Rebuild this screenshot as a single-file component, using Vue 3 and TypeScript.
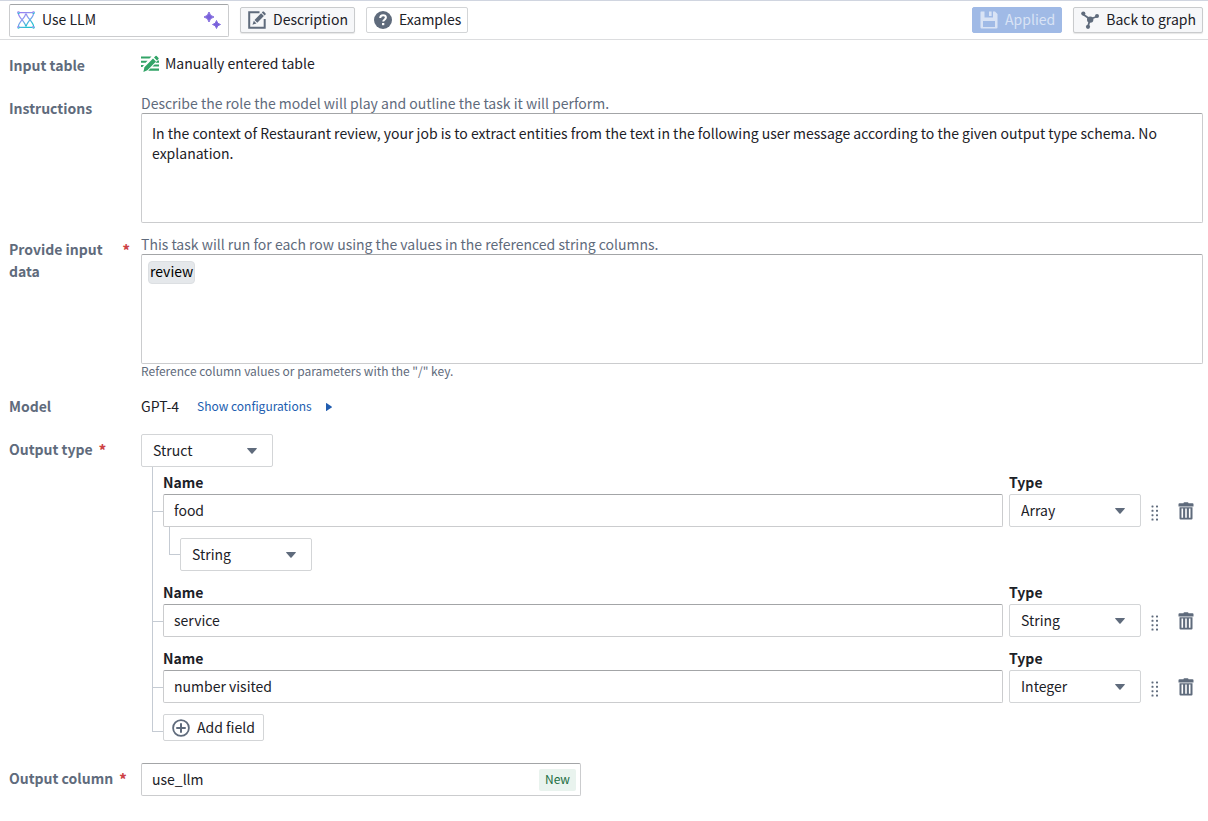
<script setup lang="ts">
import { ref } from 'vue'

interface Field {
  id: number
  name: string
  type: string
  itemType?: string
}

const types = ['Struct', 'Array', 'String', 'Integer']

const transformName = ref('Use LLM')
const instructions = ref(
  'In the context of Restaurant review, your job is to extract entities from the text in the following user message according to the given output type schema. No explanation.',
)
const inputColumns = ref(['review'])
const inputText = ref('')
const outputType = ref('Struct')
const outputColumn = ref('use_llm')
const showConfig = ref(false)
const fields = ref<Field[]>([
  { id: 1, name: 'food', type: 'Array', itemType: 'String' },
  { id: 2, name: 'service', type: 'String' },
  { id: 3, name: 'number visited', type: 'Integer' },
])

function addField(): void {
  const id = Math.max(0, ...fields.value.map((f) => f.id)) + 1
  fields.value.push({ id, name: '', type: 'String' })
}

function removeField(id: number): void {
  fields.value = fields.value.filter((f) => f.id !== id)
}
</script>

<template>
  <div class="page">
    <header class="toolbar">
      <div class="input title-box">
        <svg class="icon" viewBox="0 0 18 18" fill="none" aria-hidden="true">
          <defs>
            <linearGradient id="helix" x1="0" y1="0" x2="0.6" y2="1">
              <stop offset="0" stop-color="#9a7cf0" />
              <stop offset="0.5" stop-color="#8a9cf0" />
              <stop offset="1" stop-color="#1fc3cf" />
            </linearGradient>
          </defs>
          <g stroke="url(#helix)" stroke-width="1.2">
            <path d="M2.200 1.700h13.600M2.200 16.300h13.600" />
            <path d="M1.400 2.600c.4 4.400 6.900 8 7.300 12.800M8.700 2.600c-.4 4.400-6.900 8-7.300 12.800M9.300 2.600c.4 4.400 6.900 8 7.300 12.800M16.600 2.600c-.4 4.400-6.900 8-7.300 12.800" />
            <circle cx="1.500" cy="1.700" r=".8" /><circle cx="16.500" cy="1.700" r=".8" />
            <circle cx="1.500" cy="16.300" r=".8" /><circle cx="16.500" cy="16.300" r=".8" />
          </g>
        </svg>
        <input v-model="transformName" class="bare" type="text" aria-label="Transform name" />
        <svg class="icon" viewBox="0 0 18 18" fill="#7961db" aria-hidden="true">
          <path d="M6 1q.8 4.200 5 5q-4.200.8-5 5q-.8-4.200-5-5q4.200-.8 5-5z" stroke="#7961db" stroke-width=".9" />
          <path d="M13.500 9.500q.6 3.400 4 4q-3.400.6-4 4q-.6-3.400-4-4q3.400-.6 4-4z" stroke="#7961db" stroke-width=".9" />
        </svg>
      </div>
      <button type="button" class="btn filled">
        <svg class="icon" viewBox="0 0 18 18" aria-hidden="true">
          <path d="M11.500 1.300H1.200v15.500h15.500V8" fill="none" stroke="#5f6b7c" stroke-width="2" />
          <path d="M4.500 13.700l1.300-4 2.700 2.700zM6.500 8.900l6.600-6.600 2.800 2.800-6.600 6.600zM13.800 1.600l1-1q.5-.4 1 0l1.800 1.800q.4.500 0 1l-1 1z" fill="#5f6b7c" />
        </svg>
        <span>Description</span>
      </button>
      <button type="button" class="btn">
        <svg class="icon" viewBox="0 0 18 18" aria-hidden="true">
          <circle cx="9" cy="9" r="9" fill="#5f6b7c" />
          <path d="M6.200 7C6.200 5 7.400 4.200 9.100 4.200s2.800.9 2.800 2.400c0 2.100-2.700 2.100-2.700 4" fill="none" stroke="#fff" stroke-width="2" />
          <rect x="8" y="12" width="2.300" height="2.200" fill="#fff" />
        </svg>
        <span>Examples</span>
      </button>
      <div class="spacer"></div>
      <button type="button" class="btn primary" disabled>
        <svg class="icon" viewBox="0 0 18 18" fill="currentColor" aria-hidden="true">
          <path fill-rule="evenodd" d="M1 0.500h3.500v6h8.500v-6h2l2.500 2.500v13.500q0 1-1 1h-15q-1 0-1-1v-15q0-1 .5-1zM3 10v6h12v-6z" />
          <rect x="9" y="0.500" width="2.600" height="4.500" />
        </svg>
        <span>Applied</span>
      </button>
      <button type="button" class="btn filled">
        <svg class="icon" viewBox="0 0 18 18" aria-hidden="true">
          <path d="M2 3.200L8.800 8M16 5.500L9.500 8M7 15.500L9 8.500" stroke="#5f6b7c" stroke-width="1.800" />
          <g fill="#5f6b7c">
            <circle cx="2.300" cy="2.600" r="2.100" /><circle cx="16" cy="5" r="2" />
            <circle cx="7" cy="15.800" r="2.100" /><circle cx="9.200" cy="8.600" r="3.200" />
          </g>
        </svg>
        <span>Back to graph</span>
      </button>
    </header>

    <main class="form">
      <section class="row">
        <div class="label"><span>Input table</span></div>
        <div class="inline source">
          <svg class="icon" viewBox="0 0 18 18" aria-hidden="true">
            <g fill="#32a467">
              <path d="M0 1.600h10.500L8.500 3.600H0zM0 5.800h6.600L4.600 7.800H0zM0 10h3L1.400 12H0zM13.600 9.400H18v2.200h-6.600zM9.400 13.600H18v2.200H7.200zM16.600 5.600H18v2.200h-3.600z" />
              <path d="M3.400 12.200L12 3.600l3 3-8.600 8.600L2.400 17zM13 2.600l1.500-1.500q.6-.5 1.200 0l1.800 1.800q.5.600 0 1.200L16 5.600z" />
            </g>
          </svg>
          <span>Manually entered table</span>
        </div>
      </section>

      <section class="row">
        <label class="label" for="instructions"><span>Instructions</span></label>
        <div>
          <p class="helper">Describe the role the model will play and outline the task it will perform.</p>
          <textarea id="instructions" v-model="instructions" class="input area"></textarea>
        </div>
      </section>

      <section class="row">
        <label class="label" for="input-data"><span>Provide input data</span><b class="req">*</b></label>
        <div>
          <p class="helper">This task will run for each row using the values in the referenced string columns.</p>
          <div class="input token-area">
            <span v-for="column in inputColumns" :key="column" class="token">{{ column }}</span>
            <textarea id="input-data" v-model="inputText" class="bare"></textarea>
          </div>
          <p class="note">Reference column values or parameters with the "/" key.</p>
        </div>
      </section>

      <section class="row">
        <div class="label"><span>Model</span></div>
        <div class="inline model">
          <span>GPT-4</span>
          <button type="button" class="link" :aria-expanded="showConfig" @click="showConfig = !showConfig">
            <span>Show configurations</span>
            <svg class="caret-right" viewBox="0 0 6 8" aria-hidden="true"><path d="M0 .6Q0-.3.800.200L5.600 3.500q.5.500 0 1L.8 7.800Q0 8.300 0 7.400z" fill="#215db0" /></svg>
          </button>
        </div>
      </section>

      <section class="row output-type">
        <label class="label" for="output-type"><span>Output type</span><b class="req">*</b></label>
        <div>
          <div class="select">
            <select id="output-type" v-model="outputType">
              <option v-for="t in types" :key="t">{{ t }}</option>
            </select>
            <svg class="caret" viewBox="0 0 10 6" aria-hidden="true"><path d="M.7 0h8.600q1 0 .4.800L5.600 5.500q-.6.600-1.200 0L.3.800Q-.3 0 .7 0z" /></svg>
          </div>
          <div class="tree">
            <div v-for="field in fields" :key="field.id" class="field">
              <div class="cell">
                <label class="caption" :for="`name-${field.id}`">Name</label>
                <div class="branch">
                  <input :id="`name-${field.id}`" v-model="field.name" class="input text" type="text" />
                </div>
              </div>
              <div class="cell">
                <label class="caption" :for="`type-${field.id}`">Type</label>
                <div class="select">
                  <select :id="`type-${field.id}`" v-model="field.type">
                    <option v-for="t in types" :key="t">{{ t }}</option>
                  </select>
                  <svg class="caret" viewBox="0 0 10 6" aria-hidden="true"><path d="M.7 0h8.600q1 0 .4.800L5.600 5.500q-.6.600-1.200 0L.3.800Q-.3 0 .7 0z" /></svg>
                </div>
              </div>
              <div class="actions">
                <button type="button" class="icon-btn drag" aria-label="Reorder field">
                  <svg viewBox="0 0 8 16" width="8" height="16" fill="#5f6b7c" aria-hidden="true">
                    <g v-for="n in 4" :key="n">
                      <rect x="0.500" :y="n * 4.400 - 4" width="2" height="2" rx=".6" />
                      <rect x="5" :y="n * 4.400 - 4" width="2" height="2" rx=".6" />
                    </g>
                  </svg>
                </button>
                <button type="button" class="icon-btn" aria-label="Delete field" @click="removeField(field.id)">
                  <svg class="icon" viewBox="0 0 18 18" fill="#5f6b7c" aria-hidden="true">
                    <path d="M6.500 1.200Q6.500.3 7.400.3h3.200q.9 0 .9.900h4q1 0 1 1v2.200H1.500V2.200q0-1 1-1z" />
                    <path fill-rule="evenodd" d="M2.500 5.300h13V16.400q0 1.100-1.100 1.100H3.600q-1.100 0-1.100-1.100zM4.500 6.600v9.200h1.600V6.600zM8.200 6.600v9.200h1.600V6.600zM11.900 6.600v9.200h1.600V6.600z" />
                  </svg>
                </button>
              </div>
              <div v-if="field.itemType" class="nested">
                <div class="select">
                  <select v-model="field.itemType" :aria-label="`${field.name} element type`">
                    <option v-for="t in types" :key="t">{{ t }}</option>
                  </select>
                  <svg class="caret" viewBox="0 0 10 6" aria-hidden="true"><path d="M.7 0h8.600q1 0 .4.800L5.600 5.500q-.6.600-1.200 0L.3.800Q-.3 0 .7 0z" /></svg>
                </div>
              </div>
            </div>
            <button type="button" class="btn add" @click="addField">
              <svg class="icon" viewBox="0 0 18 18" fill="none" stroke="#5f6b7c" aria-hidden="true">
                <circle cx="9" cy="9" r="7.900" stroke-width="1.800" />
                <path d="M9 5v8M5 9h8" stroke-width="2" stroke-linecap="round" />
              </svg>
              <span>Add field</span>
            </button>
          </div>
        </div>
      </section>

      <section class="row">
        <label class="label" for="output-column"><span>Output column</span><b class="req">*</b></label>
        <div class="input column-box">
          <input id="output-column" v-model="outputColumn" class="bare" type="text" />
          <span class="tag">New</span>
        </div>
      </section>
    </main>
  </div>
</template>

<style>
body {
  margin: 0;
  background: #fff;
}
</style>

<style scoped>
.page {
  font: 14px/20px "Noto Sans CJK SC", "Open Sans", sans-serif;
  color: #1c2127;
}
.page *,
.page *::before {
  box-sizing: border-box;
}
button,
input,
select,
textarea {
  font: inherit;
  color: inherit;
  margin: 0;
}
p {
  margin: 0;
}
.icon {
  width: 18px;
  height: 18px;
  flex: none;
  display: block;
}
.toolbar {
  display: flex;
  align-items: center;
  gap: 11px;
  height: 40px;
  padding: 0 5px 0 9px;
  border-top: 1px solid #d0d5e0;
  border-bottom: 1px solid #dcdddf;
}
.spacer {
  flex: 1;
}
.input {
  background: #fff;
  border: 1px solid #cbccce;
  border-top-color: #a3a5a7;
  border-radius: 2px;
}
.bare {
  border: 0;
  outline: 0;
  padding: 0 0 2px;
  background: none;
  min-width: 0;
  flex: 1;
  resize: none;
}
.title-box {
  display: flex;
  align-items: center;
  gap: 7px;
  width: 220px;
  height: 33px;
  padding: 0 7px;
}
.btn {
  display: flex;
  align-items: center;
  gap: 7px;
  height: 26px;
  padding: 0 6px 0 7px;
  border: 1px solid #d3d5d7;
  border-radius: 2px;
  background: #fff;
  white-space: nowrap;
}
.btn > span,
.inline span {
  padding-bottom: 2px;
}
.btn.filled {
  background: #f6f7f9;
  border-color: #c9cbcd;
  box-shadow: 0 1px 1px rgba(17, 20, 24, 0.1);
}
.btn.primary {
  background: #a0bae6;
  border-color: #a0bae6;
  color: #d9e3f5;
}
.form {
  display: flex;
  flex-direction: column;
  gap: 11px;
  padding: 10px 5px 20px 9px;
}
.row {
  display: grid;
  grid-template-columns: 121px minmax(0, 1fr);
  column-gap: 11px;
  align-items: start;
}
.label {
  display: flex;
  gap: 6px;
  padding: 4px 0 6px;
  line-height: 22px;
  font-weight: 600;
  color: #5f6b7c;
}
.req {
  color: #cd4246;
}
.inline {
  display: flex;
  align-items: center;
  height: 28px;
}
.source {
  gap: 6px;
}
.model {
  gap: 18px;
  height: 32px;
}
.helper {
  color: #5f6b7c;
}
.note {
  height: 16px;
  color: #5f6b7c;
  font-size: 12px;
  line-height: 14px;
}
.area {
  display: block;
  width: 100%;
  height: 110px;
  padding: 9px 10px;
  resize: none;
}
.token-area {
  display: flex;
  align-items: flex-start;
  gap: 4px;
  height: 110px;
  padding: 6px;
}
.token-area .bare {
  height: 96px;
}
.token {
  padding: 0 1px 2px;
  border: 1px solid #dcdfe2;
  border-radius: 4px;
  background: #e5e8eb;
  color: #000;
  line-height: 19px;
}
.link {
  display: flex;
  align-items: center;
  gap: 14px;
  padding: 0;
  border: 0;
  background: none;
  color: #215db0;
  font-size: 12px;
}
.caret-right {
  width: 6px;
  height: 8px;
}
.output-type {
  padding-bottom: 11px;
}
.select {
  position: relative;
  width: 132px;
  height: 33px;
}
.select select {
  appearance: none;
  display: block;
  width: 100%;
  height: 100%;
  padding: 0 30px 2px 11px;
  border: 1px solid #d3d5d7;
  border-radius: 2px;
  background: #fff;
}
.caret {
  position: absolute;
  top: 14px;
  right: 16px;
  width: 10px;
  height: 6px;
  fill: #5f6b7c;
  pointer-events: none;
}
.tree {
  position: relative;
  display: flex;
  flex-direction: column;
  gap: 6px;
  margin-left: 11px;
  padding-left: 11px;
}
.tree::before {
  content: "";
  position: absolute;
  top: 0;
  left: 0;
  bottom: 9px;
  width: 11px;
  border: solid #c5cbd3;
  border-width: 0 0 1px 1px;
}
.field {
  display: grid;
  grid-template-columns: minmax(0, 1fr) 132px 56px;
  column-gap: 6px;
}
.caption {
  display: block;
  padding: 4px 0 1px;
  line-height: 22px;
  font-weight: 600;
}
.branch {
  position: relative;
}
.branch::before {
  content: "";
  position: absolute;
  left: -11px;
  top: 17px;
  width: 11px;
  border-top: 1px solid #c5cbd3;
}
.text {
  display: block;
  width: 100%;
  height: 33px;
  padding: 0 10px 2px;
}
.actions {
  display: flex;
  align-items: center;
  justify-content: space-between;
  height: 33px;
  margin-top: 27px;
  padding-right: 8px;
}
.icon-btn {
  display: flex;
  padding: 0;
  border: 0;
  background: none;
}
.drag {
  padding: 4px 4px 0;
}
.nested {
  position: relative;
  grid-column: 1;
  margin: 11px 0 0 17px;
}
.nested::before {
  content: "";
  position: absolute;
  left: -11px;
  top: -11px;
  width: 11px;
  height: 28px;
  border: solid #c5cbd3;
  border-width: 0 0 1px 1px;
}
.add {
  position: relative;
  align-self: flex-start;
  height: 27px;
  margin-top: 5px;
  padding: 0 8px;
}
.column-box {
  display: flex;
  align-items: center;
  width: 440px;
  max-width: 100%;
  height: 33px;
  padding: 0 4px 0 10px;
}
.tag {
  height: 22px;
  padding: 0 6px;
  border-radius: 2px;
  background: #e9f3ee;
  color: #1c6e42;
  font-size: 12px;
  line-height: 20px;
}
</style>
